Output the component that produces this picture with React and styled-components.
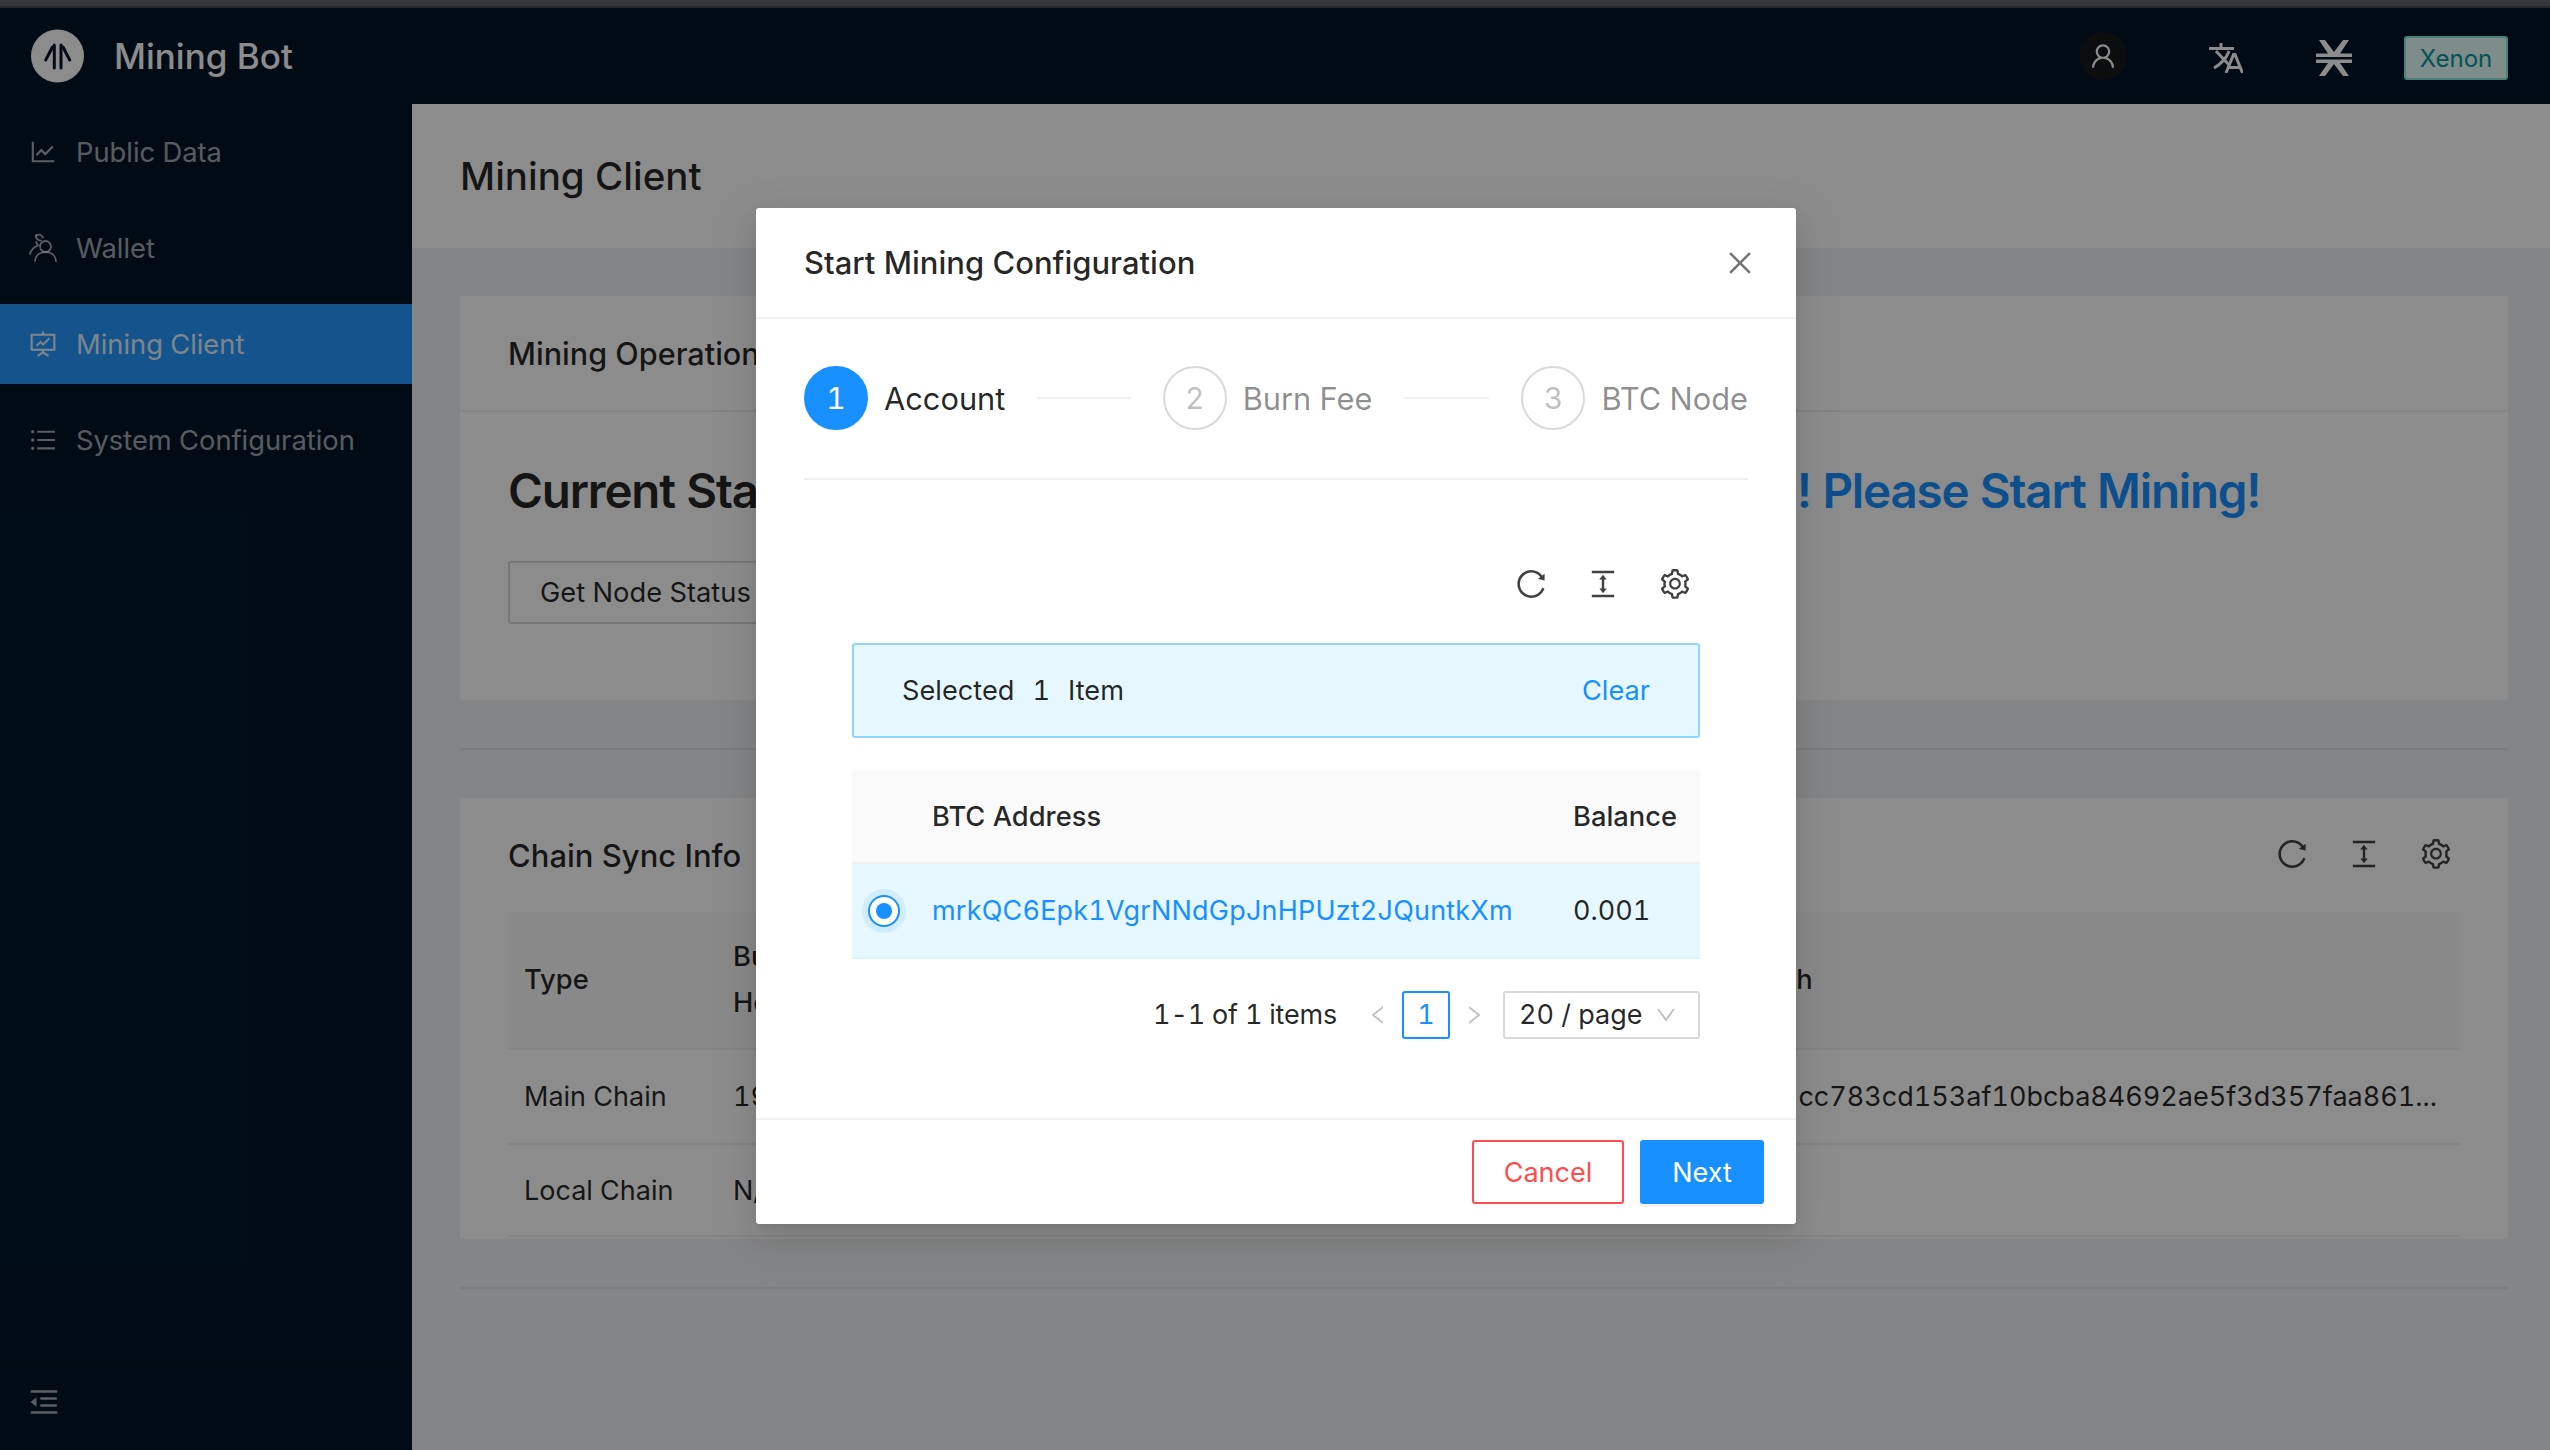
import React from 'react';
import styled, { createGlobalStyle } from 'styled-components';
import {
  AiOutlineReload, AiOutlineColumnHeight, AiOutlineSetting, AiOutlineUser, AiOutlineClose,
  AiOutlineLeft, AiOutlineRight, AiOutlineDown, AiOutlineLineChart, AiOutlineFundProjectionScreen,
  AiOutlineUnorderedList, AiOutlineMenuFold,
} from 'react-icons/ai';

const Global = createGlobalStyle`
  html, body { margin: 0; padding: 0; background: #000; }
  body { font-family: Inter, "Liberation Sans", sans-serif; font-size: 27px; color: rgba(0,0,0,.85); overflow: hidden; font-variant-numeric: tabular-nums; }
  * { box-sizing: border-box; }
`;

const Page = styled.div`width: 2550px; height: 1450px; display: flex; flex-direction: column; overflow: hidden;`;
const TopStrip = styled.div`height: 8px; flex: none; background: #36373b; border-bottom: 2px solid #27282b;`;
const Frame = styled.div`position: relative; flex: 1; display: flex; flex-direction: column; min-height: 0;`;
const Header = styled.header`height: 96px; flex: none; background: #001529; display: flex; align-items: center; padding: 0 42px 0 31px;`;
const Brand = styled.div`display: flex; align-items: center; gap: 30px; font-size: 35px; font-weight: 500; color: #fff; flex: 1;`;
const HeadIcons = styled.div`display: flex; align-items: center;`;
const AvatarWrap = styled.div`width: 48px; height: 48px; border-radius: 50%; background: #14181b; color: #fff; display: flex; align-items: center; justify-content: center; font-size: 30px; margin-right: 82px;`;
const HeadSvg = styled.svg`display: block; color: #fff; margin: 4px ${p => p.$mr}px 0 0;`;
const Tag = styled.div`width: 104px; height: 44px; margin-top: 4px; background: #e6fffb; border: 2px solid #87e8de; border-radius: 3px; color: #08979c; font-size: 24px; display: flex; align-items: center; justify-content: center;`;

const Body = styled.div`flex: 1; display: flex; min-height: 0;`;
const Sider = styled.aside`width: 412px; flex: none; background: #001529; display: flex; flex-direction: column; padding-top: 8px;`;
const Menu = styled.nav`flex: 1;`;
const MenuItem = styled.div`
  height: 80px; margin-bottom: 16px; padding-left: 28px; display: flex; align-items: center; gap: 18px;
  font-size: 27.3px; background: ${p => (p.$active ? '#2697ff' : 'transparent')};
  color: ${p => (p.$active ? 'rgba(255,255,255,.9)' : 'rgba(255,255,255,.65)')};
  svg { font-size: 30px; flex: none; }
`;
const SiderFoot = styled.div`height: 87px; flex: none; border-top: 1px solid rgba(0,0,0,.25); padding: 21px 0 0 27px; color: rgba(255,255,255,.65); font-size: 34px; line-height: 0;`;

const Main = styled.main`flex: 1; min-width: 0; background: #f0f2f5; display: flex; flex-direction: column;`;
const PageHead = styled.div`height: 144px; flex: none; background: #fff; display: flex; align-items: center; padding-left: 48px; font-size: 38.5px; font-weight: 500; color: rgba(0,0,0,.85);`;
const Content = styled.div`padding: 48px 42px 0 48px; display: flex; flex-direction: column;`;
const Card = styled.section`background: #fff; border-radius: 3px;`;
const CardHead = styled.div`height: 116px; padding: 0 48px; display: flex; align-items: center; font-size: 30.6px; font-weight: 500; border-bottom: 2px solid #f0f0f0;`;
const CardBody = styled.div`padding: 40px 48px 76px;`;
const BigStatus = styled.div`font-size: 47.5px; line-height: 78px; font-weight: 600; white-space: nowrap; margin-bottom: 31px; letter-spacing: -1.2px;`;
const BlueText = styled.span`color: #1890ff;`;
const OutlineBtn = styled.div`display: inline-flex; align-items: center; height: 63px; padding: 0 30px; border: 2px solid #d9d9d9; border-radius: 3px; font-size: 27.3px;`;
const Divider = styled.div`height: 2px; background: rgba(0,0,0,.06); margin: ${p => p.$my}px 0;`;
const ChainHead = styled.div`height: 114px; padding: 0 0 0 48px; display: flex; align-items: center; justify-content: space-between; font-size: 31px; font-weight: 500;`;
const ChainBody = styled.div`padding: 0 48px 2px;`;

const Tools = styled.div`display: flex; align-items: center; gap: 38px; font-size: 34px; color: rgba(0,0,0,.75); padding: 0 ${p => p.$pr}px ${p => p.$pb}px 0; svg { display: block; }`;

const DataTable = styled.table`width: 100%; border-collapse: collapse; table-layout: fixed; font-size: 27px;`;
const Th = styled.th`background: #fafafa; font-weight: 500; font-size: 27.3px; text-align: left; padding: 0 ${p => p.$pad}px; height: ${p => p.$h}px; line-height: 46px; border-bottom: 2px solid #f0f0f0; white-space: nowrap;`;
const Td = styled.td`padding: 0 ${p => p.$pad}px; height: ${p => p.$h}px; border-bottom: 2px solid ${p => p.$sel ? '#dcf1fb' : '#f0f0f0'}; background: ${p => p.$sel ? '#e6f7ff' : 'transparent'}; white-space: nowrap; overflow: hidden; text-align: ${p => p.$right ? 'right' : 'left'};`;

const Overlay = styled.div`position: absolute; inset: 0; background: rgba(0,0,0,.45);`;
const Modal = styled.div`
  position: absolute; left: 756px; top: 200px; width: 1040px; height: 1016px; background: #fff; border-radius: 3px;
  display: flex; flex-direction: column;
  box-shadow: 0 5px 10px -6px rgba(0,0,0,.12), 0 10px 26px 0 rgba(0,0,0,.08), 0 15px 46px 13px rgba(0,0,0,.05);
`;
const ModalHead = styled.div`height: 111px; flex: none; padding: 0 40px 0 48px; display: flex; align-items: center; justify-content: space-between; border-bottom: 2px solid #f0f0f0; font-size: 31px; font-weight: 500; svg { color: rgba(0,0,0,.55); font-size: 32px; display: block; }`;
const ModalBody = styled.div`flex: 1; padding: 47px 48px 0;`;
const Steps = styled.div`display: flex; padding-bottom: 48px; border-bottom: 2px solid #f0f0f0;`;
const Step = styled.div`display: flex; align-items: center; ${p => (p.$last ? 'flex: none;' : 'flex: 1;')} min-width: 0;`;
const StepDot = styled.div`
  width: 64px; height: 64px; border-radius: 50%; flex: none; display: flex; align-items: center; justify-content: center; font-size: 30px;
  margin-right: 16px; border: 2px solid ${p => (p.$on ? '#1890ff' : '#d9d9d9')};
  background: ${p => (p.$on ? '#1890ff' : '#fff')}; color: ${p => (p.$on ? '#fff' : 'rgba(0,0,0,.25)')};
`;
const StepLabel = styled.div`font-size: 30.8px; white-space: nowrap; color: ${p => (p.$on ? 'rgba(0,0,0,.85)' : 'rgba(0,0,0,.45)')};`;
const StepTail = styled.div`flex: 1; height: 2px; background: #f0f0f0; margin: 0 32px;`;
const Inner = styled.div`padding: 47px 48px 0;`;
const ToolRow = styled.div`height: 114px; display: flex; align-items: center; justify-content: flex-end;`;
const Alert = styled.div`height: 95px; margin: 2px 0 33px; padding: 0 48px 0 48px; background: #e6f7ff; border: 2px solid #91d5ff; border-radius: 3px; display: flex; align-items: center; justify-content: space-between; font-size: 27.2px;`;
const Gap = styled.span`display: inline-block; width: 18px;`;
const Link = styled.span`color: #1890ff;`;
const AddressLink = styled(Link)`letter-spacing: .2px;`;
const Radio = styled.span`
  display: block; width: 32px; height: 32px; border-radius: 50%; border: 2px solid #1890ff; background: #fff; position: relative;
  box-shadow: 0 0 0 6px rgba(24,144,255,.1);
  &::after { content: ''; position: absolute; left: 6px; top: 6px; width: 16px; height: 16px; border-radius: 50%; background: #1890ff; }
`;
const Pager = styled.div`margin-top: 32px; display: flex; align-items: center; justify-content: flex-end; font-size: 27px; height: 48px; line-height: 48px;`;
const PageTotal = styled.span`letter-spacing: -.2px;`;
const PageChevron = styled.span`color: rgba(0,0,0,.25); font-size: 24px; display: flex; margin: ${p => p.$m};`;
const PageNum = styled.span`width: 48px; height: 48px; border: 2px solid #1890ff; border-radius: 3px; color: #1890ff; display: flex; align-items: center; justify-content: center;`;
const PageSelect = styled.div`width: 197px; height: 48px; border: 2px solid #d9d9d9; border-radius: 3px; padding: 0 20px 0 14px; display: flex; align-items: center; justify-content: space-between; svg { color: rgba(0,0,0,.25); font-size: 24px; }`;
const ModalFoot = styled.div`height: 106px; flex: none; border-top: 2px solid #f0f0f0; padding: 0 32px; display: flex; align-items: center; justify-content: flex-end; gap: 16px;`;
const DangerBtn = styled.div`width: 152px; height: 64px; border: 2px solid #ff4d4f; border-radius: 3px; color: #ff4d4f; font-size: 27px; display: flex; align-items: center; justify-content: center;`;
const PrimaryBtn = styled.div`width: 124px; height: 64px; background: #1890ff; border-radius: 3px; color: #fff; font-size: 27px; display: flex; align-items: center; justify-content: center; box-shadow: 0 3px 0 rgba(0,0,0,.045);`;

const Logo = () => (
  <svg width="53" height="54" viewBox="0 0 53 54" style={{ display: 'block' }}>
    <circle cx="26.5" cy="27" r="26.5" fill="#fff" />
    <g stroke="#001529" strokeWidth="3" fill="none" strokeLinecap="round">
      <path d="M23.3 16V39M30 16V39" />
      <path d="M14.7 31L21.5 18M38.7 31L32 18" />
    </g>
  </svg>
);

const WalletIcon = () => (
  <svg width="30" height="30" viewBox="0 0 30 30" fill="none" stroke="currentColor" strokeWidth="1.8" strokeLinecap="round">
    <circle cx="17.5" cy="13.5" r="5.5" />
    <path d="M7 28c.5-5.5 4.5-9 10.500-9s10 3.500 10.500 9" />
    <path d="M13 7.500A4.500 4.500 0 0 1 8 2.500" />
    <path d="M8 2.800a4.300 4.300 0 0 1 7 1.800" />
    <path d="M8 8.800c.5 1.500 1 2.500 2 3.500C6 14 3 17 2 21" />
  </svg>
);

const TranslateIcon = () => (
  <HeadSvg $mr={73} width="34" height="30" viewBox="0 0 34 30" fill="none" stroke="currentColor" strokeWidth="3">
    <path d="M0 5.500H25M12 0V5.500M7 8L21 23M20 8C18 14 12 21 5 25" />
    <path d="M17 30L24.500 11.500H26L33.500 30M20 24.500H31" />
  </HeadSvg>
);

const StacksIcon = () => (
  <HeadSvg $mr={52} width="36" height="36" viewBox="0 0 36 36" fill="currentColor">
    <path d="M3 0H9L18 12L27 0H33L24 13.500H36V17H0V13.500H12Z" />
    <path d="M0 19.500H36V23H24L33 36H27L18 24L9 36H3L12 23H0Z" />
  </HeadSvg>
);

const TableTools = ({ pr, pb = 0 }) => (
  <Tools $pr={pr} $pb={pb}>
    <AiOutlineReload />
    <AiOutlineColumnHeight />
    <AiOutlineSetting />
  </Tools>
);

export default function App() {
  return (
    <Page>
      <Global />
      <TopStrip />
      <Frame>
        <Header>
          <Brand><Logo />Mining Bot</Brand>
          <HeadIcons>
            <AvatarWrap><AiOutlineUser /></AvatarWrap>
            <TranslateIcon />
            <StacksIcon />
            <Tag>Xenon</Tag>
          </HeadIcons>
        </Header>
        <Body>
          <Sider>
            <Menu>
              <MenuItem><AiOutlineLineChart />Public Data</MenuItem>
              <MenuItem><WalletIcon />Wallet</MenuItem>
              <MenuItem $active><AiOutlineFundProjectionScreen />Mining Client</MenuItem>
              <MenuItem><AiOutlineUnorderedList />System Configuration</MenuItem>
            </Menu>
            <SiderFoot><AiOutlineMenuFold /></SiderFoot>
          </Sider>
          <Main>
            <PageHead>Mining Client</PageHead>
            <Content>
              <Card>
                <CardHead>Mining Operations</CardHead>
                <CardBody>
                  <BigStatus>Current Status: <BlueText>Your Mining Tools Are Currently Not Mining! Please Start Mining!</BlueText></BigStatus>
                  <OutlineBtn>Get Node Status</OutlineBtn>
                </CardBody>
              </Card>
              <Divider $my={48} />
              <Card>
                <ChainHead>Chain Sync Info<TableTools pr={55} pb={3} /></ChainHead>
                <ChainBody>
                  <DataTable>
                    <colgroup><col width="208" /><col width="300" /><col /><col width="811" /></colgroup>
                    <thead>
                      <tr>
                        <Th $pad={16} $h={137}>Type</Th>
                        <Th $pad={17} $h={137}>Burn Block<br />Height</Th>
                        <Th $pad={17} $h={137}>Block Height</Th>
                        <Th $pad={17} $h={137}>Block Hash</Th>
                      </tr>
                    </thead>
                    <tbody>
                      <tr>
                        <Td $pad={16} $h={95}>Main Chain</Td>
                        <Td $pad={17} $h={95}>1937284</Td>
                        <Td $pad={17} $h={95}>1937284</Td>
                        <Td $pad={23} $h={95} $right>cc783cd153af10bcba84692ae5f3d357faa861...</Td>
                      </tr>
                      <tr>
                        <Td $pad={16} $h={92}>Local Chain</Td>
                        <Td $pad={17} $h={92}>N/A</Td>
                        <Td $pad={17} $h={92}>N/A</Td>
                        <Td $pad={23} $h={92} />
                      </tr>
                    </tbody>
                  </DataTable>
                </ChainBody>
              </Card>
              <Divider $my={48} />
            </Content>
          </Main>
        </Body>
        <Overlay />
        <Modal>
          <ModalHead>Start Mining Configuration<AiOutlineClose /></ModalHead>
          <ModalBody>
            <Steps>
              <Step><StepDot $on>1</StepDot><StepLabel $on>Account</StepLabel><StepTail /></Step>
              <Step><StepDot>2</StepDot><StepLabel>Burn Fee</StepLabel><StepTail /></Step>
              <Step $last><StepDot>3</StepDot><StepLabel>BTC Node</StepLabel></Step>
            </Steps>
            <Inner>
              <ToolRow><TableTools pr={8} /></ToolRow>
              <Alert>
                <span>Selected<Gap />1<Gap />Item</span>
                <Link>Clear</Link>
              </Alert>
              <DataTable>
                <colgroup><col width="64" /><col width="641" /><col /></colgroup>
                <thead>
                  <tr>
                    <Th $pad={16} $h={92}></Th>
                    <Th $pad={16} $h={92}>BTC Address</Th>
                    <Th $pad={16} $h={92}>Balance</Th>
                  </tr>
                </thead>
                <tbody>
                  <tr>
                    <Td $pad={16} $h={95} $sel><Radio /></Td>
                    <Td $pad={16} $h={95} $sel><AddressLink>mrkQC6Epk1VgrNNdGpJnHPUzt2JQuntkXm</AddressLink></Td>
                    <Td $pad={16} $h={95} $sel>0.001</Td>
                  </tr>
                </tbody>
              </DataTable>
              <Pager>
                <PageTotal>1-1 of 1 items</PageTotal>
                <PageChevron $m="0 12px 0 29px"><AiOutlineLeft /></PageChevron>
                <PageNum>1</PageNum>
                <PageChevron $m="0 17px 0 12px"><AiOutlineRight /></PageChevron>
                <PageSelect>20 / page<AiOutlineDown /></PageSelect>
              </Pager>
            </Inner>
          </ModalBody>
          <ModalFoot>
            <DangerBtn>Cancel</DangerBtn>
            <PrimaryBtn>Next</PrimaryBtn>
          </ModalFoot>
        </Modal>
      </Frame>
    </Page>
  );
}
